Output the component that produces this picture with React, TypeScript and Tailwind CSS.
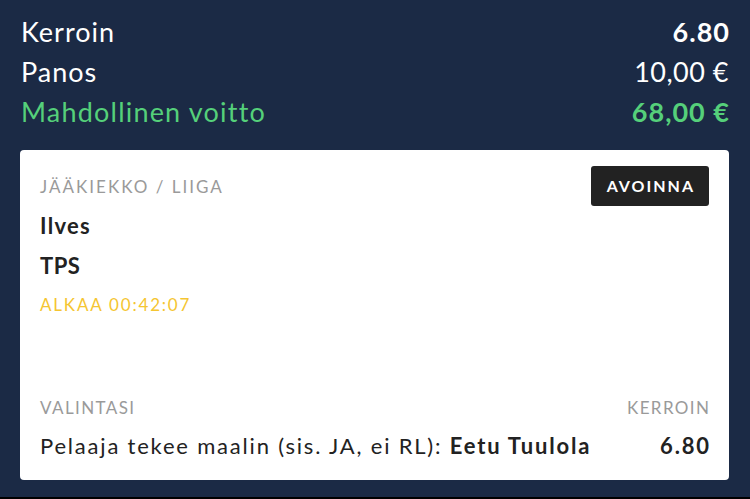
export default function App() {
  const font = { fontFamily: "Lato, 'Noto Sans', sans-serif" };
  return (
    <div className="h-[499px] w-[750px] bg-black" style={font}>
      <div className="h-[497px] bg-[#1b2a45] flex flex-col">
        <div className="pl-[21px] pr-[21px] pt-[12px]">
          <div className="flex justify-between items-center h-10 text-[27px] tracking-[1px] text-white">
            <span>Kerroin</span>
            <span className="font-bold -mr-[1px]">6.80</span>
          </div>
          <div className="flex justify-between items-center h-10 text-[27px] tracking-[0.5px] text-white">
            <span className="tracking-[1px]">Panos</span>
            <span>10,00 €</span>
          </div>
          <div className="flex justify-between items-center h-10 text-[27px] tracking-[1.2px] text-[#55d07a]">
            <span>Mahdollinen voitto</span>
            <span className="font-bold tracking-[1px] -mr-[1px]">68,00 €</span>
          </div>
        </div>
        <div className="ml-5 mr-[21px] mt-[18px] h-[330px] bg-white rounded-[4px] px-5 pt-4 pb-5 flex flex-col justify-between">
          <div>
            <div className="flex justify-between items-start">
              <span className="mt-[11px] text-[17px] leading-[20px] tracking-[2px] text-[#9a9a9a]">JÄÄKIEKKO / LIIGA</span>
              <span className="h-10 pl-[16px] pr-[14px] flex items-center rounded-[3px] bg-[#222222] text-white text-[16px] tracking-[2px] font-bold">AVOINNA</span>
            </div>
            <div className="text-[22px] leading-[40px] tracking-[1.3px] font-bold text-[#222222]">Ilves</div>
            <div className="text-[22px] leading-[40px] tracking-[0.5px] font-bold text-[#222222]">TPS</div>
            <div className="text-[17px] leading-[37px] tracking-[1.8px] text-[#f5c531]">ALKAA 00:42:07</div>
          </div>
          <div>
            <div className="flex justify-between text-[17px] leading-[20px] tracking-[1.4px] text-[#9a9a9a]">
              <span>VALINTASI</span>
              <span className="-mr-[1.4px]">KERROIN</span>
            </div>
            <div className="mt-[14px] flex justify-between text-[22px] leading-[28px] tracking-[1.8px] text-[#222222]">
              <span>
                Pelaaja tekee maalin (sis. JA, ei RL): <span className="font-bold">Eetu Tuulola</span>
              </span>
              <span className="font-bold -mr-[1.8px]">6.80</span>
            </div>
          </div>
        </div>
      </div>
    </div>
  );
}
